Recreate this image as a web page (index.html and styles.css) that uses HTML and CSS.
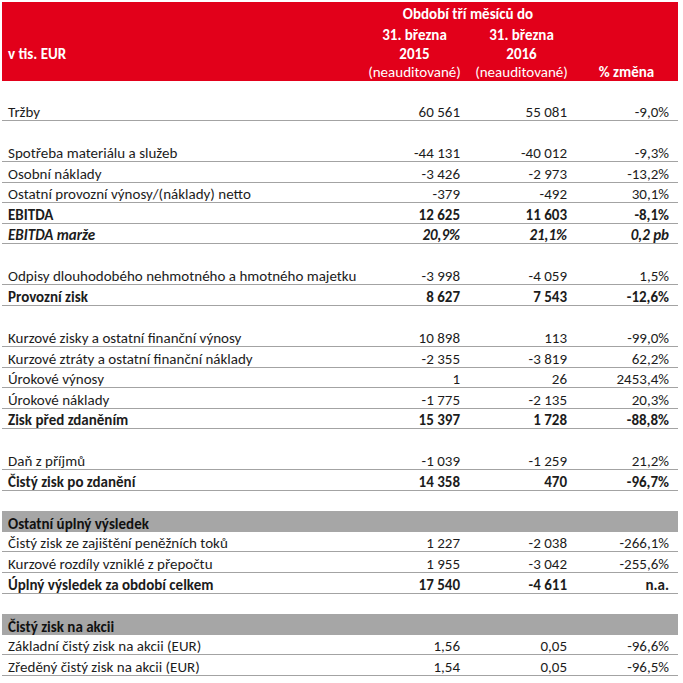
FILE: index.html
```html
<!DOCTYPE html>
<html lang="cs">
<head>
<meta charset="utf-8">
<title>Výsledky</title>
<link rel="stylesheet" href="styles.css">
</head>
<body>
<div class="sheet">
  <div class="head">
    <div class="h-period">Období tří měsíců do</div>
    <div class="h-c1 h-date">31. března</div>
    <div class="h-c2 h-date">31. března</div>
    <div class="h-unit">v tis. EUR</div>
    <div class="h-c1 h-year">2015</div>
    <div class="h-c2 h-year">2016</div>
    <div class="h-c1 h-aud">(neauditované)</div>
    <div class="h-c2 h-aud">(neauditované)</div>
    <div class="h-c3 h-chg">% změna</div>
  </div>

  <div class="row first-gap"></div>
  <div class="row line"><span>Tržby</span><span>60 561</span><span>55 081</span><span>-9,0%</span></div>
  <div class="row"></div>
  <div class="row line"><span>Spotřeba materiálu a služeb</span><span>-44 131</span><span>-40 012</span><span>-9,3%</span></div>
  <div class="row line"><span>Osobní náklady</span><span>-3 426</span><span>-2 973</span><span>-13,2%</span></div>
  <div class="row line"><span>Ostatní provozní výnosy/(náklady) netto</span><span>-379</span><span>-492</span><span>30,1%</span></div>
  <div class="row line bold"><span>EBITDA</span><span>12 625</span><span>11 603</span><span>-8,1%</span></div>
  <div class="row line bold ital"><span>EBITDA marže</span><span>20,9%</span><span>21,1%</span><span>0,2 pb</span></div>
  <div class="row"></div>
  <div class="row line"><span>Odpisy dlouhodobého nehmotného a hmotného majetku</span><span>-3 998</span><span>-4 059</span><span>1,5%</span></div>
  <div class="row line bold"><span>Provozní zisk</span><span>8 627</span><span>7 543</span><span>-12,6%</span></div>
  <div class="row"></div>
  <div class="row line"><span>Kurzové zisky a ostatní finanční výnosy</span><span>10 898</span><span>113</span><span>-99,0%</span></div>
  <div class="row line"><span>Kurzové ztráty a ostatní finanční náklady</span><span>-2 355</span><span>-3 819</span><span>62,2%</span></div>
  <div class="row line"><span>Úrokové výnosy</span><span>1</span><span>26</span><span>2453,4%</span></div>
  <div class="row line"><span>Úrokové náklady</span><span>-1 775</span><span>-2 135</span><span>20,3%</span></div>
  <div class="row line bold"><span>Zisk před zdaněním</span><span>15 397</span><span>1 728</span><span>-88,8%</span></div>
  <div class="row"></div>
  <div class="row line"><span>Daň z příjmů</span><span>-1 039</span><span>-1 259</span><span>21,2%</span></div>
  <div class="row line bold"><span>Čistý zisk po zdanění</span><span>14 358</span><span>470</span><span>-96,7%</span></div>
  <div class="row"></div>
  <div class="row band bold"><span>Ostatní úplný výsledek</span></div>
  <div class="row line"><span>Čistý zisk ze zajištění peněžních toků</span><span>1 227</span><span>-2 038</span><span>-266,1%</span></div>
  <div class="row line"><span>Kurzové rozdíly vzniklé z přepočtu</span><span>1 955</span><span>-3 042</span><span>-255,6%</span></div>
  <div class="row line bold"><span>Úplný výsledek za období celkem</span><span>17 540</span><span>-4 611</span><span>n.a.</span></div>
  <div class="row"></div>
  <div class="row band bold"><span>Čistý zisk na akcii</span></div>
  <div class="row line"><span>Základní čistý zisk na akcii (EUR)</span><span>1,56</span><span>0,05</span><span>-96,6%</span></div>
  <div class="row line"><span>Zředěný čistý zisk na akcii (EUR)</span><span>1,54</span><span>0,05</span><span>-96,5%</span></div>
</div>
</body>
</html>
```

FILE: styles.css
```css
html, body {
  margin: 0;
  padding: 0;
  background: #ffffff;
}

body {
  font-family: "Carlito", "Liberation Sans", sans-serif;
  font-size: 15px;
  color: #1c1c1c;
}

.sheet {
  padding: 2px 5px 0 2px;
  width: 676px;
}

.head {
  background: #e2001a;
  color: #ffffff;
  font-weight: bold;
  height: 79px;
  display: grid;
  grid-template-columns: 359px 107px 107px 103px;
  grid-template-rows: 23px 20px 18px 18px;
  align-items: center;
  white-space: nowrap;
}

.h-period {
  grid-column: 2 / 4;
  grid-row: 1;
  text-align: center;
}

.h-c1 { grid-column: 2; text-align: center; }
.h-c2 { grid-column: 3; text-align: center; }
.h-c3 { grid-column: 4; text-align: center; }

.h-date { grid-row: 2; }
.h-year { grid-row: 3; }
.h-aud { grid-row: 4; font-weight: normal; }
.h-chg { grid-row: 4; }

.h-unit {
  grid-column: 1;
  grid-row: 3;
  padding-left: 6px;
}

.row {
  display: grid;
  grid-template-columns: 359px 107px 107px 103px;
  height: 20.55px;
  box-sizing: border-box;
  align-items: end;
  white-space: nowrap;
  line-height: 15px;
}

.row.first-gap {
  height: 19.45px;
}

.row span {
  text-align: right;
  padding-right: 8px;
}

.row span:first-child {
  text-align: left;
  padding-left: 6px;
  padding-right: 0;
}

.row span:nth-child(2) {
  padding-right: 8px;
}

.row span:last-child:not(:first-child) {
  padding-right: 9px;
}

.line {
  border-bottom: 1px solid #a3a3a3;
}

.bold {
  font-weight: bold;
}

.ital {
  font-style: italic;
}

.band {
  background: #a6a6a6;
  color: #111111;
}
```
